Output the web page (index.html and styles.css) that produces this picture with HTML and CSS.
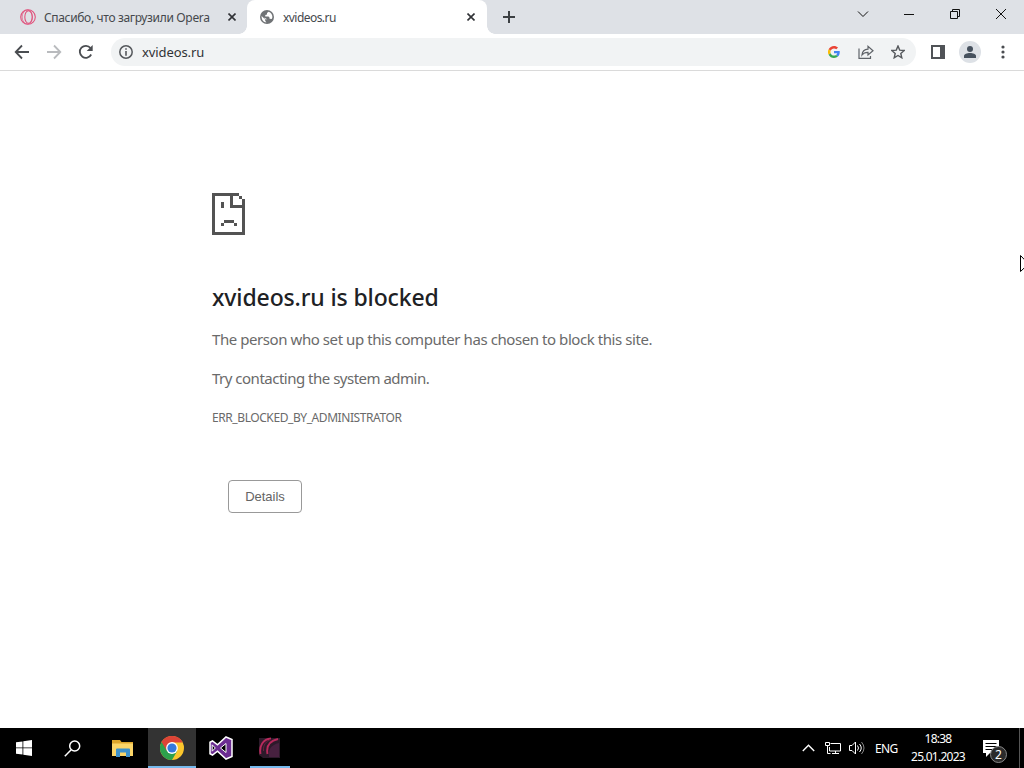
FILE: index.html
```html
<!DOCTYPE html>
<html lang="en">
<head>
  <meta charset="utf-8">
  <title>xvideos.ru</title>
  <link rel="stylesheet" href="styles.css">
</head>
<body>
  <div class="screen">
    <div class="tabstrip">
      <div class="tab">
        <svg class="favicon" width="16" height="16" viewBox="0 0 16 16" fill="none" stroke="#e0527c"><circle cx="8" cy="8" r="7.3" stroke-width="1.1"/><ellipse cx="8.5" cy="8" rx="3.7" ry="6.3" stroke-width="1.1"/><ellipse cx="7.3" cy="8" rx="5.2" ry="7" stroke-width=".7"/></svg>
        <span class="tab_title title_opera">Спасибо, что загрузили Opera</span>
        <svg class="tab_close" width="8" height="8" viewBox="0 0 8 8"><path d="M.5.5l7 7M7.5.5l-7 7"/></svg>
      </div>
      <div class="tab active">
        <svg class="favicon" width="14" height="14" viewBox="0 0 14 14"><circle cx="7" cy="7" r="7" fill="#707376"/><path d="M8.6 1.7L7 3.1v1.4L5.3 5v1.5h3.2l1 1v1.2l2.2.4c.5-.7.7-1.4.7-2.1 0-2.5-1.5-4.5-3.8-5.3zM1.6 6.1l3.6 3.5v1.1l1.2 1.7C3.7 12.2 1.6 10 1.6 7zM7.3 9.2h-2L3.8 7.5" fill="#fff"/></svg>
        <span class="tab_title title_site">xvideos.ru</span>
        <svg class="tab_close" width="8" height="8" viewBox="0 0 8 8"><path d="M.5.5l7 7M7.5.5l-7 7"/></svg>
      </div>
      <svg class="new_tab" width="12" height="12" viewBox="0 0 12 12"><path d="M6 0v12M0 6h12" stroke="#3c4043" stroke-width="2"/></svg>
      <div class="win_btns">
        <svg width="46" height="28" viewBox="0 0 46 28"><path d="M18 11.5l5 5 5-5"/></svg>
        <svg width="46" height="28" viewBox="0 0 46 28"><path d="M18 14.5h10"/></svg>
        <svg width="46" height="28" viewBox="0 0 46 28"><path d="M18.500 11.500h7v7h-7zM20.500 11.500v-2h7v7h-2"/></svg>
        <svg width="46" height="28" viewBox="0 0 46 28"><path d="M18 9l10 10M28 9L18 19"/></svg>
      </div>
    </div>

    <div class="toolbar">
      <svg class="nav" width="16" height="16" viewBox="0 0 16 16"><path d="M15 8H2M8 1.500L1.700 8 8 14.500"/></svg>
      <svg class="nav off" width="16" height="16" viewBox="0 0 16 16"><path d="M1 8h13M8 1.500L14.300 8 8 14.500"/></svg>
      <svg class="nav" width="16" height="16" viewBox="0 0 16 16"><path d="M13.200 10.500A6 6 0 1 1 12.500 4"/><path d="M14.700 1v6h-6z" fill="#4a4d51" stroke="none"/></svg>
      <div class="omnibox">
        <svg width="14" height="14" viewBox="0 0 14 14"><circle cx="7" cy="7" r="6.200" fill="none" stroke="#55585c" stroke-width="1.500"/><path d="M6.200 3.200h1.600v1.600H6.200zM6.200 6h1.600v4.800H6.200z" fill="#55585c"/></svg>
        <span class="url">xvideos.ru</span>
        <svg class="google" width="12" height="12" viewBox="0 0 48 48"><path fill="#ea4335" d="M24 9.500c3.540 0 6.710 1.220 9.210 3.600l6.850-6.850C35.900 2.380 30.470 0 24 0 14.620 0 6.510 5.380 2.560 13.220l7.980 6.190C12.430 13.720 17.740 9.500 24 9.500z"/><path fill="#4285f4" d="M46.980 24.550c0-1.570-.15-3.090-.38-4.550H24v9.020h12.940c-.58 2.960-2.260 5.480-4.780 7.180l7.730 6c4.510-4.180 7.090-10.360 7.090-17.650z"/><path fill="#fbbc05" d="M10.530 28.590a14.500 14.500 0 0 1 0-9.180l-7.980-6.190a24 24 0 0 0 0 21.560z"/><path fill="#34a853" d="M24 48c6.480 0 11.930-2.130 15.890-5.810l-7.730-6c-2.150 1.450-4.920 2.300-8.160 2.300-6.260 0-11.570-4.220-13.470-9.910l-7.980 6.190C6.510 42.620 14.620 48 24 48z"/></svg>
        <svg class="share" width="16" height="14" viewBox="0 0 16 14"><path d="M1 3.500v9.800h11.500V11M4 10c.3-4 2.500-5.800 6-5.900V1.300L15 5.700l-5 4.200V7.300C7.300 7.200 5.500 8 4 10z" fill="none" stroke="#5f6368" stroke-width="1.200"/></svg>
        <svg class="star" width="14" height="14" viewBox="0 0 14 14"><path d="M7 1l1.700 4.100 4.500.4-3.400 2.900 1 4.400L7 10.500l-3.800 2.300 1-4.400L.8 5.500l4.500-.4z" fill="none" stroke="#55585c" stroke-width="1.400"/></svg>
      </div>
      <svg class="panel_icon" width="14" height="14" viewBox="0 0 14 14"><path d="M1 1h12v12H1z" fill="none" stroke="#505357" stroke-width="2"/><path d="M9 1h4v12H9z" fill="#505357"/></svg>
      <div class="avatar">
        <svg width="12" height="12" viewBox="0 0 12 12" fill="#46515e"><circle cx="6" cy="3" r="3"/><path d="M0 12v-2c0-2 3-3 6-3s6 1 6 3v2z"/></svg>
      </div>
      <svg class="menu" width="4" height="14" viewBox="0 0 4 14" fill="#4a4d51"><circle cx="2" cy="2" r="1.600"/><circle cx="2" cy="7" r="1.600"/><circle cx="2" cy="12" r="1.600"/></svg>
    </div>

    <div class="page">
      <svg class="sad_page" width="33" height="42" viewBox="0 0 11 14" fill="#535353" shape-rendering="crispEdges"><path d="M0 0h9v1H7v3h3V2h1v12H0zM1 1v12h9V5H6V1z" fill-rule="evenodd"/><path d="M9 1h1v1H9zM3 3h1v2H3zM4 9h3.400v1H4zM3 10h1v1H3zM7.400 10h1v1h-1z"/></svg>
      <h1>xvideos.ru is blocked</h1>
      <p class="msg_block">The person who set up this computer has chosen to block this site.</p>
      <p class="msg_admin">Try contacting the system admin.</p>
      <div class="err_code">ERR_BLOCKED_BY_ADMINISTRATOR</div>
      <button>Details</button>
      <svg class="cursor" width="12" height="19" viewBox="0 0 12 19"><path d="M.5.500v16l4-3.800 2.500 5.500 2-1-2.500-5.200h5z" fill="#fff" stroke="#000"/></svg>
    </div>

    <div class="taskbar">
      <div class="task start">
        <svg width="16" height="16" viewBox="0 0 16 16" fill="#fff"><path d="M0 2.300L6.500 1.400v6.100H0zM7.300 1.300L16 0v7.500H7.300zM0 8.300h6.500v6.300L0 13.700zM7.300 8.300H16V16l-8.700-1.300z"/></svg>
      </div>
      <div class="task search">
        <svg width="17" height="17" viewBox="0 0 17 17" fill="none" stroke="#fff"><circle cx="10.700" cy="6" r="5" stroke-width="1.500"/><path d="M7.200 9.800L.8 16.200" stroke-width="1.500"/></svg>
      </div>
      <div class="task explorer">
        <svg width="22" height="18" viewBox="0 0 22 18"><path d="M0 1h8l1.500 2H21v14H0z" fill="#dda62c"/><path d="M0 4.500h21V17H0z" fill="#fbd568"/><path d="M4 18v-7.500q0-1 1-1h12q1 0 1 1V18h-4v-4.500H8V18z" fill="#3d91cb"/></svg>
      </div>
      <div class="task chrome">
        <svg width="24" height="24" viewBox="0 0 24 24"><circle cx="12" cy="12" r="12" fill="#fbc62c"/><path d="M12 12L1.600 6A12 12 0 0 0 12 24l5.200-9z" fill="#2da14c"/><path d="M12 6.500h10.700A12 12 0 0 0 1.600 6l5.300 9L12 12z" fill="#dd4437"/><circle cx="12" cy="12" r="5.900" fill="#fff"/><circle cx="12" cy="12" r="4.600" fill="#3479dc"/></svg>
      </div>
      <div class="task">
        <svg width="24" height="24" viewBox="0 0 24 24"><path d="M17 1l6 2.500v17L17 23l-8.500-7.800L3.500 19 1 17.700V6.300L3.500 5l5 3.800z" fill="#6b2c91" stroke="#fff" stroke-width="1.500"/><path d="M17 7.500v9L11.500 12zM3.200 8.800v6.400L6.300 12z" fill="#000" stroke="#fff" stroke-width="1"/></svg>
      </div>
      <div class="task opera">
        <svg width="22" height="21" viewBox="0 0 22 21"><path d="M0 1h21v20H4L0 18z" fill="#2c1a2a"/><path d="M10 20C9 12 12 8 20 6v14z" fill="#47213f"/><path d="M1.500 17C0 9 4 2 12 1.500M8.500 17C7 9 10 4 19 2" fill="none" stroke="#b82a5c" stroke-width="1.900"/><path d="M4.500 14C4 8 7 4 12 2.500" fill="none" stroke="#6d1e3f"/></svg>
      </div>
      <div class="tray">
        <svg width="13" height="8" viewBox="0 0 13 8" fill="none" stroke="#fff" stroke-width="1.400"><path d="M.8 7l5.700-5.700L12.200 7"/></svg>
        <svg class="network" width="16" height="14" viewBox="0 0 16 14" fill="none" stroke="#fff"><path d="M5.500 2.500h10v7.500H4.500V6M7 12.500h7M10.500 10v2.500M.500 1.500h4v3h-4zM2.500 4.500v8h3"/></svg>
        <svg class="sound" width="16" height="14" viewBox="0 0 16 14" fill="none" stroke="#fff"><path d="M.500 4.500H3l3.500-3.500v12L3 9.500H.500zM8.500 4.500q2 2.500 0 5M10.500 3q3.500 4 0 8"/><path d="M12.500 1q5 6 0 12" stroke="#888"/></svg>
        <span class="lang">ENG</span>
        <div class="clock"><span class="time">18:38</span><span class="date">25.01.2023</span></div>
        <div class="notes">
          <svg width="16" height="17" viewBox="0 0 16 17"><path d="M0 0h16v13H7l-4 4v-4H0z" fill="#fff"/><path d="M2.500 3.500h11M2.500 6.500h11M2.500 9.500h7" stroke="#000"/></svg>
          <span class="count">2</span>
        </div>
      </div>
    </div>
  </div>
</body>
</html>
```
FILE: styles.css
```css
body {
  margin: 0;
  font-family: "Noto Sans", "Open Sans", sans-serif;
  background-color: #fff;
}
svg {
  display: block;
  flex: none;
}
.screen {
  width: 1024px;
  height: 768px;
  display: flex;
  flex-direction: column;
  overflow: hidden;
}
.tabstrip {
  height: 34px;
  display: flex;
  align-items: center;
  background-color: #dee1e6;
}
.tab {
  box-sizing: border-box;
  width: 247px;
  height: 34px;
  padding: 0 11px 0 20px;
  display: flex;
  align-items: center;
  font-size: 12px;
  color: #45484c;
}
.tab.active {
  width: 240px;
  padding: 0 12px 0 13px;
  background-color: #fff;
  border-radius: 8px 8px 0 0;
}
/* curved feet of the active tab */
.tab.active::before, .tab.active::after {
  content: "";
  width: 8px;
  height: 8px;
  align-self: flex-end;
  flex: none;
}
.tab.active::before {
  margin-left: -21px;
  margin-right: 13px;
  background: radial-gradient(circle at 0 0, #dee1e6 7.5px, #fff 8px);
}
.tab.active::after {
  margin-left: 12px;
  margin-right: -20px;
  background: radial-gradient(circle at 100% 0, #dee1e6 7.5px, #fff 8px);
}
.favicon {
  margin-right: 8px;
}
.active .favicon {
  margin-right: 9px;
}
.tab_title {
  flex: 1;
  white-space: nowrap;
}
.title_opera {
  letter-spacing: -0.34px;
}
.title_site {
  letter-spacing: -0.55px;
}
.tab_close path {
  stroke: #303236;
  stroke-width: 1.6;
}
.new_tab {
  margin-left: 16px;
}
.win_btns {
  margin-left: auto;
  margin-bottom: 6px;
  display: flex;
}
.win_btns path {
  fill: none;
  stroke: #111;
}
.toolbar {
  box-sizing: border-box;
  height: 37px;
  padding: 0 19px 0 14px;
  display: flex;
  align-items: center;
  border-bottom: 1px solid #dadada;
}
.nav {
  margin-right: 16px;
  fill: none;
  stroke: #4a4d51;
  stroke-width: 1.8;
}
.nav.off {
  stroke: #b9bbbe;
}
.omnibox {
  box-sizing: border-box;
  width: 805px;
  height: 28px;
  margin-left: 1px;
  padding: 0 11px 0 8px;
  display: flex;
  align-items: center;
  border-radius: 14px;
  background-color: #f1f3f4;
}
.url {
  margin-left: 9px;
  flex: 1;
  font-size: 13px;
  letter-spacing: -0.1px;
  color: #303236;
}
.share {
  margin-left: 18px;
}
.star {
  margin-left: 17px;
}
.panel_icon {
  margin-left: 15px;
}
.avatar {
  width: 22px;
  height: 22px;
  margin-left: 14px;
  display: flex;
  align-items: center;
  justify-content: center;
  border-radius: 50%;
  background-color: #dde1e6;
}
.menu {
  margin-left: 20px;
}
.page {
  position: relative;
  flex: 1;
  padding: 122px 0 0 212px;
  color: #6a6a6a;
}
h1 {
  margin: 44px 0 0;
  font-size: 23px;
  line-height: 36px;
  font-weight: 500;
  letter-spacing: -0.13px;
  color: #202124;
}
p {
  margin: 0;
  font-size: 15px;
  line-height: 24px;
}
.msg_block {
  margin-top: 12px;
  letter-spacing: -0.43px;
}
.msg_admin {
  margin-top: 15px;
  letter-spacing: -0.5px;
}
.err_code {
  margin-top: 18px;
  font-size: 12px;
  line-height: 20px;
  letter-spacing: -0.42px;
}
button {
  display: block;
  width: 74px;
  height: 33px;
  margin: 52px 0 0 16px;
  padding: 0;
  border: 1px solid #999;
  border-radius: 4px;
  background-color: #fff;
  font-family: "Liberation Sans", Arial, sans-serif;
  font-size: 13px;
  color: #646464;
}
.cursor {
  position: absolute;
  left: 1020px;
  top: 184px;
}
.taskbar {
  height: 40px;
  display: flex;
  background-color: #000;
  color: #fff;
}
.task {
  box-sizing: border-box;
  width: 48px;
  height: 40px;
  margin-right: 1px;
  display: flex;
  align-items: center;
  justify-content: center;
}
.start {
  margin-right: 0;
}
.search {
  margin-right: 3px;
}
.chrome {
  background-color: #333;
  border-bottom: 2px solid #76b9ed;
  padding-top: 2px;
}
.opera {
  width: 40px;
  margin-left: 4px;
  border-bottom: 2px solid #76b9ed;
}
.tray {
  margin-left: auto;
  display: flex;
  align-items: center;
  padding-right: 4px;
  height: 40px;
}
.tray::after {
  content: "";
  width: 1px;
  height: 40px;
  margin-left: 20px;
  background-color: #555;
}
.network {
  margin-left: 10px;
}
.sound {
  margin-left: 8px;
}
.lang {
  width: 24px;
  margin-left: 10px;
  font-size: 12px;
  letter-spacing: -0.6px;
}
.clock {
  width: 56px;
  margin-left: 11px;
  display: flex;
  flex-direction: column;
  align-items: center;
  font-size: 12px;
  line-height: 18px;
  letter-spacing: -0.75px;
}
.notes {
  position: relative;
  margin-left: 17px;
}
.count {
  box-sizing: border-box;
  position: absolute;
  left: 7px;
  top: 6px;
  width: 17px;
  height: 17px;
  border: 1px solid #888;
  border-radius: 50%;
  background-color: #2b2b2b;
  font-size: 12px;
  line-height: 15px;
  text-align: center;
}
```
